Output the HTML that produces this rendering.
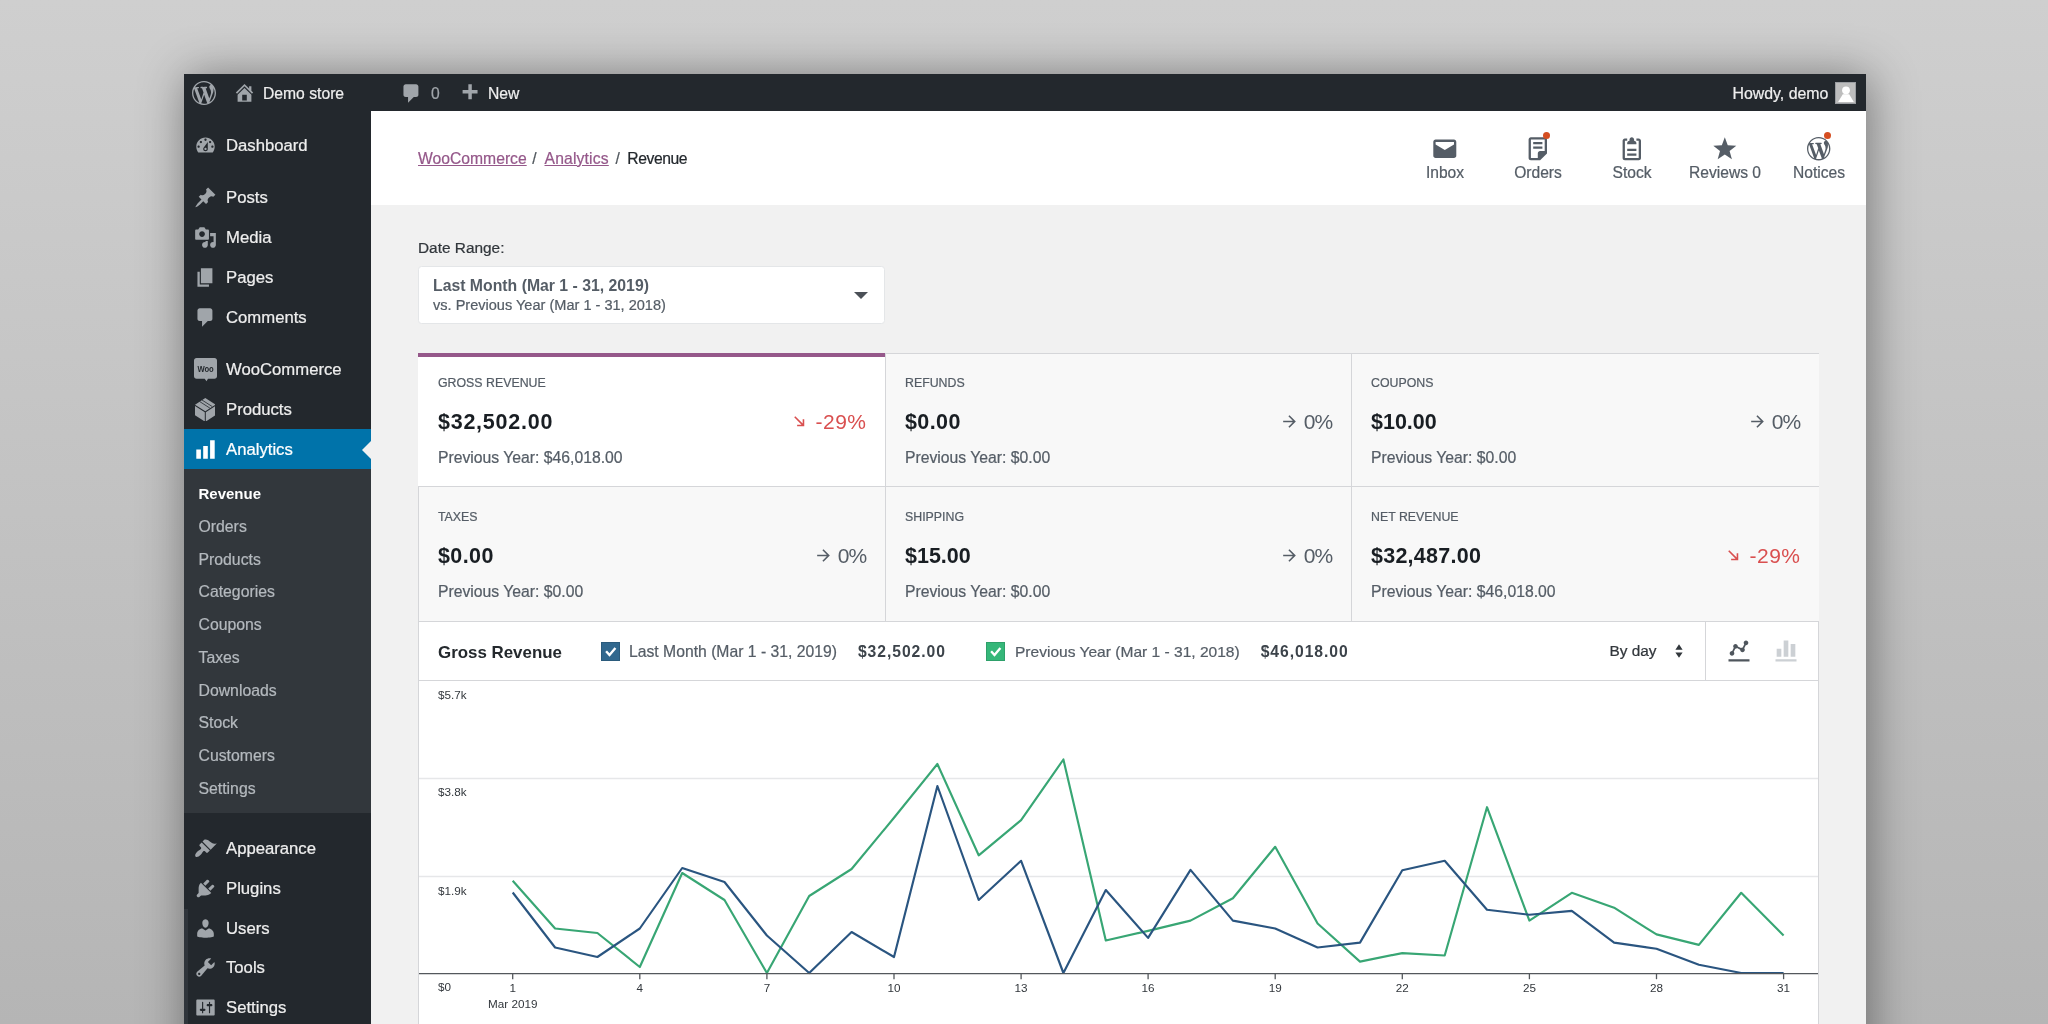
<!DOCTYPE html>
<html lang="en">
<head>
<meta charset="utf-8">
<title>Revenue - WooCommerce Analytics</title>
<style>
*{box-sizing:border-box;margin:0;padding:0}
html,body{width:2048px;height:1024px;overflow:hidden}
body{font-family:"Liberation Sans",sans-serif;background:linear-gradient(180deg,#cfcfcf 0%,#b5b5b5 100%);position:relative;color:#23282d}
#win{will-change:transform;position:absolute;left:184px;top:74px;width:1682px;height:1000px;background:#f1f1f1;box-shadow:3px 2px 44px rgba(0,0,0,.42)}
.abs{position:absolute}
#win{-webkit-text-stroke:.22px currentColor}
#win b,.cell .v,.cell .d,#ch .ttl,#dp .a,#sub div.c{-webkit-text-stroke:0}
/* admin bar */
#bar{position:absolute;left:0;top:0;width:1682px;height:37px;background:#23282d;color:#eee;font-size:15.7px}
#bar .t{position:absolute;top:1px;line-height:37px;white-space:nowrap}
#bar svg{position:absolute;fill:#a0a5aa}
/* sidebar */
#side{position:absolute;left:0;top:37px;width:187px;height:970px;background:#23282d}
.mi{position:absolute;left:0;width:187px;height:40px;color:#eee;font-size:16.7px;line-height:40px}
.mi span{position:absolute;left:42px;top:1px;white-space:nowrap}
.mi svg{position:absolute;left:10px;top:9px;width:23px;height:23px;fill:#a0a5aa}
.mi.cur{background:#0073aa;color:#fff;height:41px}
.mi.cur svg{fill:#fff}
.mi.cur:after{content:"";position:absolute;right:0;top:12px;border:9px solid transparent;border-right-color:#f1f1f1;border-left-width:0}
#sub{position:absolute;left:0;top:394px;width:187px;height:344px;background:#32373c}
#sub div{position:absolute;left:14.5px;color:#b4b9be;font-size:15.8px;line-height:20px;white-space:nowrap}
#sub div.c{color:#fff;font-weight:bold;font-size:15px}
/* header */
#hdr{position:absolute;left:187px;top:37px;width:1495px;height:94px;background:#fff}
#crumb{position:absolute;left:0;top:1px;line-height:94px;font-size:15.6px;color:#23282d;white-space:nowrap}
#crumb span{position:absolute;top:0}
#crumb a{color:#95588a;text-decoration:underline}
#crumb i{position:absolute;top:0;font-style:normal;color:#50575d;width:10px;text-align:center}
.tab{position:absolute;top:0;width:94px;height:94px;text-align:center;color:#555d66;font-size:15.6px}
.tab svg{position:absolute;left:33.200px;top:24.200px;width:27.600px;height:27.600px;fill:#555d66}
.tab svg.wp{left:35.300px;top:26.200px;width:23.400px;height:23.400px}
.tab span{position:absolute;left:-10px;right:-10px;top:52px;line-height:20px;white-space:nowrap}
.tab b{position:absolute;left:52.300px;top:21.400px;width:7px;height:7px;border-radius:50%;background:#d54e21}
/* content */
#dr{position:absolute;left:234px;top:163.500px;font-size:15.4px;line-height:20px;color:#32373c}
#dp{position:absolute;left:234px;top:192px;width:467px;height:58px;background:#fff;border:1px solid #e4e6e8;border-radius:3.500px}
#dp .a{position:absolute;left:14px;top:9px;font-size:15.8px;font-weight:bold;color:#555d66;line-height:19px;white-space:nowrap}
#dp .b{position:absolute;left:14px;top:29px;font-size:14.55px;color:#555d66;line-height:19px;white-space:nowrap}
#dp:after{content:"";position:absolute;right:16.500px;top:24.500px;border:7px solid transparent;border-top:7.500px solid #4b5057;border-bottom-width:0}
#sum{position:absolute;left:234px;top:279px;width:1401px;height:269px;background:#f8f8f8;border:1px solid #d5d6d9}
.cell{position:absolute;width:467px;height:134px;border-right:1px solid #d5d6d9;border-bottom:1px solid #d5d6d9;background:#f8f8f8}
.cell.sel:before{content:"";position:absolute;left:0;right:0;top:0;height:4px;background:#95588a}
.cell.sel{background:#fff;margin-top:-1px;height:134px;margin-left:-1px;width:468px}
.cell .l{position:absolute;left:19px;top:21px;font-size:12.35px;line-height:16px;color:#555d66;white-space:nowrap}
.cell .v{position:absolute;left:19px;top:55px;letter-spacing:.75px;font-size:21.5px;font-weight:bold;line-height:26px;color:#191e23;white-space:nowrap}
.cell .d{position:absolute;right:18.500px;top:55px;font-size:21px;letter-spacing:-.8px;line-height:26px;color:#555d66;white-space:nowrap}
.cell .d.neg{color:#d94f4f;letter-spacing:.5px}
.cell .d.neg svg{margin-right:6px}
.r2 div{margin-top:.7px}
.r2 div.p{margin-top:1.700px}
.cell .d svg{display:inline-block;vertical-align:-2px;width:19px;height:19px;fill:currentColor;margin-right:5px}
.cell .p{position:absolute;left:19px;top:93.500px;font-size:15.74px;line-height:20px;color:#555d66;white-space:nowrap}
#ch{position:absolute;left:234px;top:547px;width:1401px;height:60px;background:#fff;border:1px solid #d5d6d9}
#cb{position:absolute;left:234px;top:607px;width:1401px;height:420px;background:#fff;border:1px solid #d5d6d9;border-top:0}
#ch .ttl{position:absolute;left:19px;top:1px;line-height:59px;font-size:16.9px;font-weight:bold;color:#24292d;white-space:nowrap}
#ch .lg{position:absolute;top:-.5px;line-height:59px;font-size:15.73px;color:#555d66;white-space:nowrap}
#ch .lg b{color:#3c434a;margin-left:21px;letter-spacing:.95px;font-size:15.7px}
.ck{position:absolute;top:20px;width:19px;height:19px}
.ck svg{position:absolute;left:0;top:0;width:19px;height:19px;fill:none;stroke:#fff;stroke-width:2.4}
.ck{box-shadow:inset 0 0 0 1px rgba(0,0,0,.12)}
</style>
</head>
<body>
<div id="win">
  <div id="bar">
    <svg style="left:8px;top:7px;width:24px;height:24px" viewBox="0 0 20 20"><path d="M20 10c0-5.51-4.49-10-10-10C4.48 0 0 4.49 0 10c0 5.52 4.48 10 10 10 5.51 0 10-4.48 10-10zM7.78 15.37L4.37 6.22c.55-.02 1.17-.08 1.17-.08.5-.06.44-1.13-.06-1.11 0 0-1.45.11-2.37.11-.18 0-.37 0-.58-.01C4.12 2.69 6.87 1.11 10 1.11c2.33 0 4.45.87 6.05 2.34-.68-.11-1.65.39-1.65 1.58 0 .74.45 1.36.9 2.1.35.61.55 1.36.55 2.46 0 1.49-1.4 5-1.4 5l-3.03-8.37c.54-.02.82-.17.82-.17.5-.05.44-1.25-.06-1.22 0 0-1.44.12-2.38.12-.87 0-2.33-.12-2.33-.12-.5-.03-.56 1.2-.06 1.22l.92.08 1.26 3.41zM17.41 10c.24-.64.74-1.87.43-4.25.7 1.29 1.05 2.71 1.05 4.25 0 3.29-1.73 6.24-4.4 7.78.97-2.59 1.94-5.2 2.92-7.78zM6.1 18.09C3.12 16.65 1.11 13.53 1.11 10c0-1.3.23-2.48.72-3.59C3.25 10.3 4.67 14.2 6.1 18.09zm4.03-6.63l2.58 6.98c-.86.29-1.76.45-2.71.45-.79 0-1.57-.11-2.29-.33.81-2.38 1.62-4.74 2.42-7.1z"/></svg>
    <svg style="left:49px;top:7px;width:23px;height:23px" viewBox="0 0 20 20"><path d="M16 8.5l1.53 1.53-1.06 1.06L10 4.62l-6.47 6.47-1.06-1.06L10 2.5l4 4v-2h2v4zm-6-2.460l6 5.990V18H4v-5.970zM12 17v-5H8v5h4z"/></svg>
    <div class="t" style="left:79px">Demo store</div>
    <svg style="left:216px;top:8px;width:23px;height:23px" viewBox="0 0 20 20"><path d="M5 2h9c1.100 0 2 .9 2 2v7c0 1.100-.9 2-2 2h-2l-5 5v-5H5c-1.100 0-2-.9-2-2V4c0-1.100.9-2 2-2z"/></svg>
    <div class="t" style="left:247px;color:#a0a5aa">0</div>
    <svg style="left:274px;top:8px;width:23px;height:23px" viewBox="0 0 20 20"><path d="M17 7v3h-5v5H9v-5H4V7h5V2h3v5h5z"/></svg>
    <div class="t" style="left:304px">New</div>
    <div class="t" style="right:37.600px;font-size:15.900px">Howdy, demo</div>
    <div class="abs" style="right:9.600px;top:8.100px;width:21.500px;height:21.500px;background:#bdbdbd;border:1px solid #9b9ea2;overflow:hidden"><svg style="left:-1px;top:-1px;width:21.500px;height:21.500px;fill:#fff" viewBox="0 0 21.500 21.500"><circle cx="11" cy="8.300" r="3.900"/><path d="M7.800 12.200h6.400l4.600 7.800H3.100z"/></svg></div>
  </div>

  <div id="side">
    <div class="mi" style="top:14px"><svg viewBox="0 0 20 20"><path d="M3.760 16h12.480c1.100-1.370 1.760-3.110 1.760-5 0-4.420-3.580-8-8-8s-8 3.580-8 8c0 1.890.66 3.630 1.760 5zM10 4c.55 0 1 .45 1 1s-.45 1-1 1-1-.45-1-1 .45-1 1-1zM6 6c.55 0 1 .45 1 1s-.45 1-1 1-1-.45-1-1 .45-1 1-1zm8 0c.55 0 1 .45 1 1s-.45 1-1 1-1-.45-1-1 .45-1 1-1zm-5.370 5.550L12 7v6c0 1.100-.9 2-2 2s-2-.9-2-2c0-.57.24-1.080.63-1.450zM4 10c.55 0 1 .45 1 1s-.45 1-1 1-1-.45-1-1 .45-1 1-1zm12 0c.55 0 1 .45 1 1s-.45 1-1 1-1-.45-1-1 .45-1 1-1zm-5 3c0-.55-.45-1-1-1s-1 .45-1 1 .45 1 1 1 1-.45 1-1z"/></svg><span>Dashboard</span></div>
    <div class="mi" style="top:66px"><svg viewBox="0 0 20 20"><path d="M10.440 3.020l1.820-1.820 6.360 6.350-1.830 1.820c-1.050-.68-2.480-.57-3.410.36l-.75.75c-.92.93-1.040 2.350-.35 3.410l-1.830 1.820-2.410-2.410-2.800 2.790c-.42.42-3.380 2.710-3.800 2.290s1.860-3.390 2.280-3.810l2.790-2.790L4.100 9.360l1.830-1.820c1.050.69 2.480.57 3.400-.36l.75-.75c.93-.92 1.050-2.350.36-3.410z"/></svg><span>Posts</span></div>
    <div class="mi" style="top:106px"><svg viewBox="0 0 20 20"><path d="M13 11V4c0-.55-.45-1-1-1h-1.670L9 1H5L3.670 3H2c-.55 0-1 .45-1 1v7c0 .55.45 1 1 1h10c.55 0 1-.45 1-1zM7 4.500c1.380 0 2.500 1.120 2.500 2.500S8.380 9.500 7 9.500 4.500 8.380 4.500 7 5.620 4.500 7 4.500zM14 6h5v10.500c0 1.380-1.120 2.500-2.500 2.500S14 17.880 14 16.500s1.120-2.500 2.500-2.500c.17 0 .34.020.5.050V9h-3V6zm-4 8.050V13h2v3.500c0 1.380-1.120 2.500-2.500 2.500S7 17.880 7 16.500 8.120 14 9.500 14c.17 0 .34.020.5.050z"/></svg><span>Media</span></div>
    <div class="mi" style="top:146px"><svg viewBox="0 0 20 20"><path d="M6 15V2h10v13H6zm-1 1h8v2H3V5h2v11z"/></svg><span>Pages</span></div>
    <div class="mi" style="top:186px"><svg viewBox="0 0 20 20"><path d="M5 2h9c1.100 0 2 .9 2 2v7c0 1.100-.9 2-2 2h-2l-5 5v-5H5c-1.100 0-2-.9-2-2V4c0-1.100.9-2 2-2z"/></svg><span>Comments</span></div>
    <div class="mi" style="top:238px"><svg viewBox="0 0 23 24" style="left:10px;top:9px;width:23px;height:24px"><path d="M2.500 0h18c1.400 0 2.500 1.100 2.500 2.500v15.700c0 1.400-1.100 2.500-2.500 2.500H14l-1.500 2.600-1.800-2.600H2.500C1.100 20.700 0 19.600 0 18.200V2.500C0 1.100 1.100 0 2.500 0z"/><text x="11.600" y="13.700" text-anchor="middle" font-family="Liberation Sans, sans-serif" font-weight="bold" font-size="8.600" fill="#23282d" textLength="16.400" lengthAdjust="spacingAndGlyphs">Woo</text></svg><span>WooCommerce</span></div>
    <div class="mi" style="top:278px"><svg viewBox="0 0 20.600 23.500" style="left:10.800px;top:8.700px;width:20.600px;height:23.500px"><path d="M10.300 0L20.600 6.700 10.300 13.300 0 6.700zM0 7.900l9.800 6.300v9.300L0 17.200zM20.600 7.900l-9.800 6.300v9.300l9.800-6.300z"/><path d="M4.600 3.500l10.300 6.600M7 2l10.300 6.600" stroke="#23282d" stroke-width=".8" fill="none"/></svg><span>Products</span></div>
    <div class="mi cur" style="top:318px"><svg viewBox="0 0 20 20"><path d="M18 18V2h-4v16h4zm-6 0V7H8v11h4zm-6 0v-8H2v8h4z"/></svg><span>Analytics</span></div>
    <div id="sub" style="top:358px">
      <div class="c" style="top:15px">Revenue</div>
      <div style="top:48px">Orders</div>
      <div style="top:81px">Products</div>
      <div style="top:113px">Categories</div>
      <div style="top:146px">Coupons</div>
      <div style="top:179px">Taxes</div>
      <div style="top:212px">Downloads</div>
      <div style="top:244px">Stock</div>
      <div style="top:277px">Customers</div>
      <div style="top:310px">Settings</div>
    </div>
    <div class="mi" style="top:717px"><svg viewBox="0 0 20 20"><path d="M14.480 11.060L7.410 3.990l1.500-1.500c.5-.56 2.300-.47 3.510.32 1.210.8 1.430 1.280 2.910 2.100 1.180.64 2.450 1.260 4.450.85zm-.71.71L6.700 4.700 4.930 6.470c-.39.39-.39 1.020 0 1.410l1.060 1.060c.39.39.39 1.030 0 1.420-.6.6-1.430 1.110-2.210 1.690-.35.26-.7.53-1.010.84C1.430 14.230.4 16.080 1.400 17.070c.99 1 2.840-.03 4.180-1.360.31-.31.58-.66.85-1.020.57-.78 1.080-1.610 1.690-2.210.39-.39 1.020-.39 1.410 0l1.060 1.060c.39.39 1.020.39 1.410 0z"/></svg><span>Appearance</span></div>
    <div class="mi" style="top:757px"><svg viewBox="0 0 20 20"><path d="M13.110 4.360L9.870 7.600 8 5.730l3.240-3.240c.35-.34 1.050-.2 1.560.32.52.51.66 1.210.31 1.550zm-8 1.770l.91-1.120 9.010 9.010-1.190.84c-.71.71-2.630 1.160-3.820 1.160H6.140L4.900 17.260c-.59.59-1.540.59-2.120 0-.59-.58-.59-1.530 0-2.120l1.240-1.240v-3.880c0-1.130.4-3.190 1.090-3.890zm7.260 3.970l3.240-3.240c.34-.35 1.040-.21 1.550.31.52.51.66 1.210.31 1.550l-3.240 3.250z"/></svg><span>Plugins</span></div>
    <div class="mi" style="top:796.500px"><svg viewBox="0 0 20 20"><path d="M10 9.250c-2.270 0-2.730-3.440-2.730-3.440C7 4.020 7.820 2 9.970 2c2.160 0 2.980 2.020 2.710 3.810 0 0-.41 3.440-2.680 3.440zm0 2.570L12.720 10c2.390 0 4.520 2.330 4.520 4.530v2.490s-3.650 1.130-7.240 1.130c-3.650 0-7.240-1.130-7.240-1.130v-2.490c0-2.250 1.940-4.480 4.470-4.480z"/></svg><span>Users</span></div>
    <div class="mi" style="top:836px"><svg viewBox="0 0 20 20"><path d="M16.680 9.770c-1.340 1.340-3.300 1.670-4.950.99l-5.410 6.520c-.99.99-2.590.99-3.580 0s-.99-2.590 0-3.570l6.520-5.420c-.68-1.650-.35-3.610.99-4.950 1.280-1.280 3.120-1.620 4.720-1.060l-2.890 2.890 2.820 2.820 2.860-2.870c.53 1.580.18 3.390-1.080 4.650zM3.810 16.210c.4.390 1.040.39 1.430 0 .4-.4.4-1.040 0-1.430-.39-.4-1.030-.4-1.430 0-.39.39-.39 1.030 0 1.430z"/></svg><span>Tools</span></div>
    <div class="mi" style="top:876px"><svg viewBox="0 0 20 20"><path d="M18 16V4c0-.55-.45-1-1-1H3c-.55 0-1 .45-1 1v12c0 .55.45 1 1 1h14c.55 0 1-.45 1-1zM8 11h1c.55 0 1 .45 1 1s-.45 1-1 1H8v1.500c0 .28-.22.5-.5.5s-.5-.22-.5-.5V13H6c-.55 0-1-.45-1-1s.45-1 1-1h1V5.500c0-.28.22-.5.5-.5s.5.22.5.5V11zm5-2h-1c-.55 0-1-.45-1-1s.45-1 1-1h1V5.500c0-.28.22-.5.5-.5s.5.22.5.5V7h1c.55 0 1 .45 1 1s-.45 1-1 1h-1v5.500c0 .28-.22.5-.5.5s-.5-.22-.5-.5V9z"/></svg><span>Settings</span></div>
  </div>

  <div class="abs" style="left:0;top:834.500px;width:3.500px;height:200px;background:#30353b"></div>
  <div id="hdr">
    <div id="crumb"><span style="left:47px;font-size:15.7px"><a>WooCommerce</a></span><i style="left:158.500px">/</i><span style="left:173.500px;font-size:15.700px;letter-spacing:.17px"><a>Analytics</a></span><i style="left:241.600px">/</i><span style="left:256.300px;font-size:15.700px;letter-spacing:-.42px">Revenue</span></div>
    <div class="tab" style="left:1027px"><svg viewBox="0 0 24 24"><path d="M20 4H4c-1.105 0-2 .895-2 2v12c0 1.105.895 2 2 2h16c1.105 0 2-.895 2-2V6c0-1.105-.895-2-2-2zm0 4.236l-8 4.882-8-4.882V6h16v2.236z"/></svg><span>Inbox</span></div>
    <div class="tab" style="left:1120px"><svg viewBox="0 0 24 24"><path d="M16 8H8V6h8v2zm0 2H8v2h8v-2zm4-6v12l-6 6H6c-1.105 0-2-.895-2-2V4c0-1.105.895-2 2-2h12c1.105 0 2 .895 2 2zm-2 10V4H6v16h6v-4c0-1.105.895-2 2-2h4z"/></svg><b></b><span>Orders</span></div>
    <div class="tab" style="left:1214px"><svg viewBox="0 0 24 24"><path d="M16 18H8v-2h8v2zm0-6H8v2h8v-2zm2-9h-2v2h2v15H6V5h2V3H6c-1.105 0-2 .895-2 2v15c0 1.105.895 2 2 2h12c1.105 0 2-.895 2-2V5c0-1.105-.895-2-2-2zm-4 2V4c0-1.105-.895-2-2-2s-2 .895-2 2v1c-1.105 0-2 .895-2 2v1h8V7c0-1.105-.895-2-2-2z"/></svg><span>Stock</span></div>
    <div class="tab" style="left:1307px"><svg viewBox="0 0 24 24"><path d="M12 2l2.582 6.953L22 9.257l-5.822 4.602L18.180 21 12 16.890 5.820 21l2.002-7.140L2 9.256l7.418-.304z"/></svg><span>Reviews 0</span></div>
    <div class="tab" style="left:1401px"><svg class="wp" viewBox="0 0 20 20"><path d="M20 10c0-5.51-4.49-10-10-10C4.48 0 0 4.49 0 10c0 5.52 4.48 10 10 10 5.51 0 10-4.48 10-10zM7.78 15.37L4.37 6.22c.55-.02 1.17-.08 1.17-.08.5-.06.44-1.13-.06-1.11 0 0-1.45.11-2.37.11-.18 0-.37 0-.58-.01C4.12 2.69 6.87 1.11 10 1.11c2.33 0 4.45.87 6.05 2.34-.68-.11-1.65.39-1.65 1.58 0 .74.45 1.36.9 2.1.35.61.55 1.36.55 2.46 0 1.49-1.4 5-1.4 5l-3.03-8.37c.54-.02.82-.17.82-.17.5-.05.44-1.25-.06-1.22 0 0-1.44.12-2.38.12-.87 0-2.33-.12-2.33-.12-.5-.03-.56 1.2-.06 1.22l.92.08 1.26 3.41zM17.41 10c.24-.64.74-1.87.43-4.250.7 1.290 1.050 2.710 1.050 4.250 0 3.290-1.730 6.240-4.400 7.780.97-2.590 1.940-5.200 2.920-7.780zM6.100 18.090C3.120 16.650 1.110 13.530 1.110 10c0-1.300.23-2.480.72-3.590C3.250 10.300 4.670 14.200 6.100 18.090zm4.030-6.630l2.580 6.980c-.86.29-1.760.45-2.710.45-.79 0-1.570-.11-2.290-.33.81-2.380 1.620-4.740 2.420-7.100z"/></svg><b></b><span>Notices</span></div>
  </div>

  <div id="dr">Date Range:</div>
  <div id="dp"><div class="a">Last Month (Mar 1 - 31, 2019)</div><div class="b">vs. Previous Year (Mar 1 - 31, 2018)</div></div>

  <div id="sum">
    <div class="cell sel" style="left:0;top:0"><div class="l" style="top:22px;left:20px">GROSS REVENUE</div><div class="v" style="top:56px;left:20px">$32,502.00</div><div class="d neg" style="top:56px"><svg viewBox="0 0 24 24"><path d="M18 9v9H9v-2h5.590L5.300 6.710l1.410-1.420L16 14.590V9z"/></svg>-29%</div><div class="p" style="top:94.500px;left:20px">Previous Year: $46,018.00</div></div>
    <div class="cell" style="left:467px;top:0;width:466px;height:133px"><div class="l">REFUNDS</div><div class="v" style="letter-spacing:.4px">$0.00</div><div class="d"><svg viewBox="0 0 24 24"><path d="M12 4l-1.410 1.410L16.170 11H4v2h12.170l-5.580 5.590L12 20l8-8z"/></svg>0%</div><div class="p">Previous Year: $0.00</div></div>
    <div class="cell" style="left:933px;top:0;border-right:0;height:133px"><div class="l">COUPONS</div><div class="v" style="letter-spacing:0">$10.00</div><div class="d"><svg viewBox="0 0 24 24"><path d="M12 4l-1.410 1.410L16.170 11H4v2h12.170l-5.580 5.590L12 20l8-8z"/></svg>0%</div><div class="p">Previous Year: $0.00</div></div>
    <div class="cell r2" style="left:0;top:133px;height:135px"><div class="l">TAXES</div><div class="v" style="letter-spacing:.4px">$0.00</div><div class="d"><svg viewBox="0 0 24 24"><path d="M12 4l-1.410 1.410L16.170 11H4v2h12.170l-5.580 5.590L12 20l8-8z"/></svg>0%</div><div class="p">Previous Year: $0.00</div></div>
    <div class="cell r2" style="left:467px;top:133px;height:135px;width:466px"><div class="l">SHIPPING</div><div class="v" style="letter-spacing:0">$15.00</div><div class="d"><svg viewBox="0 0 24 24"><path d="M12 4l-1.410 1.410L16.170 11H4v2h12.170l-5.580 5.590L12 20l8-8z"/></svg>0%</div><div class="p">Previous Year: $0.00</div></div>
    <div class="cell r2" style="left:933px;top:133px;height:135px;border-right:0"><div class="l">NET REVENUE</div><div class="v" style="letter-spacing:.25px">$32,487.00</div><div class="d neg"><svg viewBox="0 0 24 24"><path d="M18 9v9H9v-2h5.590L5.300 6.710l1.410-1.420L16 14.590V9z"/></svg>-29%</div><div class="p">Previous Year: $46,018.00</div></div>
  </div>

  <div id="ch">
    <div class="ttl">Gross Revenue</div>
    <div class="ck" style="left:182px;background:#31688e"><svg viewBox="0 0 19 19"><path d="M5.100 9.200l3.400 3.800 5.900-7"/></svg></div>
    <div class="lg" style="left:210px">Last Month (Mar 1 - 31, 2019)<b>$32,502.00</b></div>
    <div class="ck" style="left:567px;background:#35b779"><svg viewBox="0 0 19 19"><path d="M5.100 9.200l3.400 3.800 5.900-7"/></svg></div>
    <div class="lg" style="left:596px;font-size:15.550px">Previous Year (Mar 1 - 31, 2018)<b>$46,018.00</b></div>
    <div class="lg" style="left:1190.500px;color:#32373c;font-size:15.4px;top:-1px">By day</div>
    <svg class="abs" style="left:1254px;top:20.300px;width:12px;height:18px;fill:#32373c" viewBox="0 0 12 18"><path d="M6 2.300l3.600 5.400h-7.200zM6 15.800l3.600-5.400h-7.200z"/></svg>
    <div class="abs" style="left:1286px;top:0;width:1px;height:59px;background:#d5d6d9"></div>
    <svg class="abs" style="left:1305.700px;top:15px;width:28px;height:28px;fill:#4f565d" viewBox="0 0 24 24"><path d="M3 19h18v2H3zm3-3c1.100 0 2-.9 2-2 0-.5-.2-1-.5-1.300L8.800 10H9c.5 0 1-.2 1.300-.5l2.700 1.400v.1c0 1.100.9 2 2 2s2-.9 2-2c0-.5-.2-.9-.5-1.300L17.800 7h.2c1.100 0 2-.9 2-2s-.9-2-2-2-2 .9-2 2c0 .5.2 1 .5 1.300L15.200 9H15c-.5 0-1 .2-1.300.5L11 8.200V8c0-1.100-.9-2-2-2s-2 .9-2 2c0 .5.2 1 .5 1.300L6.200 12H6c-1.100 0-2 .9-2 2s.9 2 2 2z"/></svg>
    <svg class="abs" style="left:1352.500px;top:15px;width:28px;height:28px;fill:#ccd0d4" viewBox="0 0 24 24"><path d="M21 21H3v-2h18v2zM8 10H4v7h4v-7zm6-7h-4v14h4V3zm6 3h-4v11h4V6z"/></svg>
  </div>

  <div id="cb">
    <svg class="abs" style="left:0;top:0" width="1399" height="420" viewBox="0 0 1399 420" font-family="Liberation Sans, sans-serif" font-size="11.7" fill="#32373c">
<g stroke="#e6e7e9" stroke-width="1.5"><line x1="0" x2="1399" y1="97.5" y2="97.5"/><line x1="0" x2="1399" y1="195.6" y2="195.6"/></g>
<text x="19.0" y="18.4">$5.7k</text>
<text x="19.0" y="115.1">$3.8k</text>
<text x="19.0" y="213.8">$1.9k</text>
<text x="19.0" y="310.0">$0</text>
<polyline fill="none" stroke="#38a674" stroke-width="2.15" stroke-linejoin="round" points="93.7,199.7 136.1,247.5 178.4,252.0 220.8,286.0 263.2,192.0 305.5,219.0 347.9,292.0 390.2,215.0 432.6,188.0 475.0,136.8 518.4,83.0 559.7,174.3 602.1,139.1 644.4,78.5 686.8,259.5 729.1,249.9 771.5,239.6 813.9,217.3 856.2,165.8 898.6,242.5 941.0,280.6 983.3,272.1 1025.7,274.5 1068.0,126.2 1110.4,239.6 1152.8,211.8 1195.1,226.7 1237.5,253.4 1279.9,263.9 1322.2,211.8 1364.6,254.5"/>
<polyline fill="none" stroke="#2a5580" stroke-width="2.15" stroke-linejoin="round" points="93.7,211.5 136.1,266.5 178.4,276.0 220.8,247.5 263.2,187.0 305.5,201.0 347.9,254.5 390.2,292.0 432.6,251.0 475.0,276.0 518.4,105.0 559.7,219.0 602.1,179.8 644.4,292.0 686.8,209.0 729.1,256.9 771.5,188.9 813.9,239.6 856.2,247.5 898.6,266.5 941.0,261.6 983.3,189.2 1025.7,179.8 1068.0,228.8 1110.4,233.7 1152.8,229.9 1195.1,261.6 1237.5,267.7 1279.9,283.8 1322.2,292.0 1364.6,292.0"/>
<line x1="0" x2="1399" y1="292.6" y2="292.6" stroke="#54585c" stroke-width="1.3"/>
<g stroke="#54585c" stroke-width="1.3"><line x1="93.7" x2="93.7" y1="292.6" y2="298.2"/><line x1="220.8" x2="220.8" y1="292.6" y2="298.2"/><line x1="347.9" x2="347.9" y1="292.6" y2="298.2"/><line x1="475.0" x2="475.0" y1="292.6" y2="298.2"/><line x1="602.1" x2="602.1" y1="292.6" y2="298.2"/><line x1="729.1" x2="729.1" y1="292.6" y2="298.2"/><line x1="856.2" x2="856.2" y1="292.6" y2="298.2"/><line x1="983.3" x2="983.3" y1="292.6" y2="298.2"/><line x1="1110.4" x2="1110.4" y1="292.6" y2="298.2"/><line x1="1237.5" x2="1237.5" y1="292.6" y2="298.2"/><line x1="1364.6" x2="1364.6" y1="292.6" y2="298.2"/></g>
<g text-anchor="middle"><text x="93.7" y="310.8">1</text><text x="220.8" y="310.8">4</text><text x="347.9" y="310.8">7</text><text x="475.0" y="310.8">10</text><text x="602.1" y="310.8">13</text><text x="729.1" y="310.8">16</text><text x="856.2" y="310.8">19</text><text x="983.3" y="310.8">22</text><text x="1110.4" y="310.8">25</text><text x="1237.5" y="310.8">28</text><text x="1364.6" y="310.8">31</text><text x="93.7" y="326.9">Mar 2019</text></g>
</svg>
  </div>
</div>
</body>
</html>
